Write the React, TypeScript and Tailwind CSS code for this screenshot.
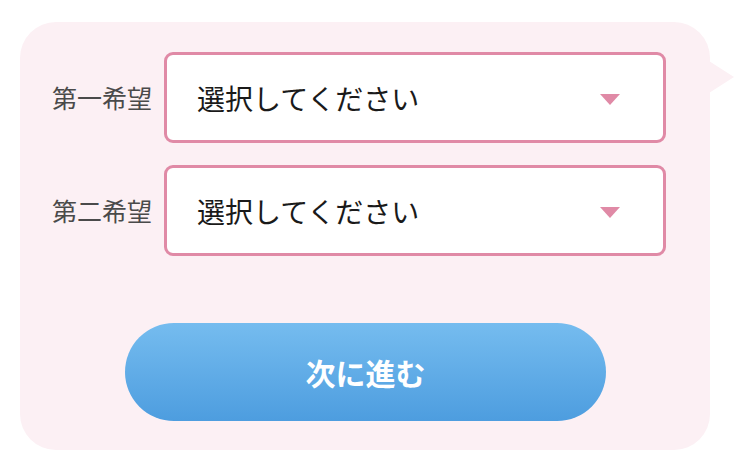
import { useState } from 'react';

const font = { fontFamily: '"Noto Sans CJK JP", "Noto Sans", sans-serif' };

type SelectRowProps = {
  label: string;
  value: string;
  onChange: (v: string) => void;
};

function SelectRow({ label, value, onChange }: SelectRowProps) {
  return (
    <div className="flex items-center">
      <span className="w-[112px] shrink-0 text-[25px] leading-none text-[#4a4a4a]">{label}</span>
      <label className="relative flex h-[91px] w-[502px] items-center rounded-[9px] border-[3px] border-[#e08aa6] bg-white pl-[30px]">
        <select
          value={value}
          onChange={(e) => onChange(e.target.value)}
          className="absolute inset-0 cursor-pointer opacity-0"
        >
          <option value="">選択してください</option>
          <option value="a">午前</option>
          <option value="b">午後</option>
        </select>
        <span className="text-[28px] leading-none text-[#1a1a1a]">
          {value === '' ? '選択してください' : value === 'a' ? '午前' : '午後'}
        </span>
        {/* 下向き三角 */}
        <span className="absolute right-[43px] top-[39px] h-0 w-0 border-x-[10px] border-t-[11px] border-x-transparent border-t-[#e08aa6]" />
      </label>
    </div>
  );
}

function App() {
  const [first, setFirst] = useState('');
  const [second, setSecond] = useState('');

  return (
    <div className="h-[463px] w-[750px] overflow-hidden bg-white pl-[20px] pt-[22px]" style={font}>
      <div className="relative h-[428px] w-[690px] rounded-[36px] bg-[#fcf0f4] pl-[32px] pt-[30px]">
        {/* 吹き出しのしっぽ */}
        <span className="absolute right-[-24px] top-[39px] h-0 w-0 border-y-[16px] border-l-[25px] border-y-transparent border-l-[#fcf0f4]" />

        <div className="flex flex-col gap-[22px]">
          <SelectRow label="第一希望" value={first} onChange={setFirst} />
          <SelectRow label="第二希望" value={second} onChange={setSecond} />
        </div>

        <button className="ml-[73px] mt-[67px] flex h-[98px] w-[481px] items-center justify-center rounded-full bg-gradient-to-b from-[#75bcef] to-[#4d9ddf] text-[30px] font-bold text-white">
          次に進む
        </button>
      </div>
    </div>
  );
}

export default App;
